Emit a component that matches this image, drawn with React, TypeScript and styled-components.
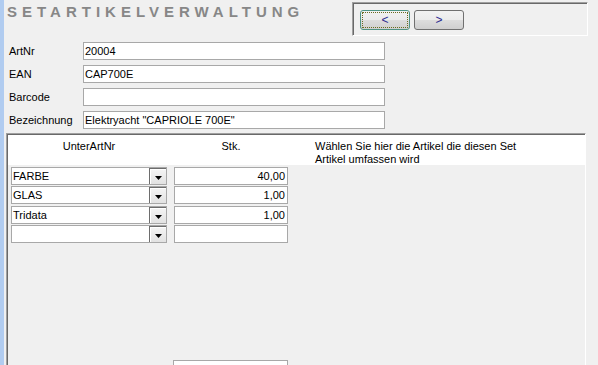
import styled, { createGlobalStyle } from 'styled-components';

const GlobalStyle = createGlobalStyle`
    html, body {
        margin: 0;
        padding: 0;
        background: #f0f0f0;
    }
`;

const Page = styled.div`
    display: flex;
    width: 598px;
    height: 365px;
    overflow: hidden;
    background: #f0f0f0;
    font-family: "Liberation Sans", Arial, sans-serif;
    font-size: 11px;
    color: #000;
`;

const SideBar = styled.div`
    flex: 0 0 4px;
    background: #b1ccf0;
`;

const Main = styled.div`
    flex: 1;
    display: flex;
    flex-direction: column;
    padding-left: 2px;
    min-width: 0;
`;

const TopBar = styled.div`
    display: flex;
    align-items: flex-start;
    height: 38px;
`;

const Title = styled.h1`
    margin: 0;
    padding: 3px 0 0 1px;
    font-size: 15px;
    font-weight: bold;
    letter-spacing: 5px;
    color: #878787;
    line-height: 17px;
    white-space: nowrap;
`;

const NavFrame = styled.div`
    margin: 2px 10px 0 auto;
    width: 236px;
    height: 34px;
    box-sizing: border-box;
    display: flex;
    gap: 4px;
    padding: 7px 0 0 7px;
    border-top: 1px solid #a0a0a0;
    border-left: 1px solid #a0a0a0;
    border-right: 1px solid #fff;
    border-bottom: 1px solid #fff;
    box-shadow: inset 1px 1px 0 #696969;
`;

const NavButton = styled.button<{ $focused?: boolean }>`
    width: 50px;
    height: 20px;
    box-sizing: border-box;
    padding: 0;
    border: 1px solid ${(p) => (p.$focused ? '#4f9384' : '#707070')};
    border-radius: 3px;
    background: linear-gradient(#f2f2f2, #ebebeb 50%, #dddddd 50%, #cfcfcf);
    font-family: "Liberation Sans", Arial, sans-serif;
    font-size: 12px;
    color: #2b2b90;
    outline: ${(p) => (p.$focused ? '1px dotted #6b6b20' : 'none')};
    outline-offset: -3px;
`;

const Fields = styled.div`
    display: grid;
    grid-template-columns: 77px 302px;
    grid-auto-rows: 18px;
    row-gap: 5px;
    margin-top: 6px;
`;

const Label = styled.label`
    display: flex;
    align-items: center;
    padding-left: 3px;
`;

const TextBox = styled.div<{ $align?: 'left' | 'right' }>`
    box-sizing: border-box;
    height: 18px;
    background: #fff;
    border: 1px solid #a8a8a8;
    padding: 0 2px 0 1px;
    line-height: 16px;
    white-space: nowrap;
    overflow: hidden;
    text-align: ${(p) => p.$align ?? 'left'};
`;

const SubForm = styled.div`
    margin: 4px 12px 0 0;
    height: 270px;
    flex-shrink: 0;
    display: flex;
    flex-direction: column;
    border-top: 1px solid #a0a0a0;
    border-left: 1px solid #a0a0a0;
    border-right: 1px solid #fff;
    box-shadow: inset 1px 1px 0 #696969;
    padding: 1px 0 0 1px;
`;

const SubHeader = styled.div`
    display: grid;
    grid-template-columns: 156px 114px 1fr;
    column-gap: 7px;
    height: 30px;
    box-sizing: border-box;
    padding: 5px 0 0 3px;
    background: #fff;
    line-height: 13px;
`;

const ColTitle = styled.div`
    text-align: center;
`;

const Hint = styled.div`
    padding-left: 20px;
    max-width: 212px;
`;

const Detail = styled.div`
    height: 195px;
    display: flex;
    flex-direction: column;
    gap: 1.3px;
    padding: 2px 0 0 3px;
    box-sizing: border-box;
`;

const Row = styled.div`
    display: grid;
    grid-template-columns: 156px 114px;
    column-gap: 7px;
    height: 18px;
`;

const Combo = styled.div`
    display: flex;
    box-sizing: border-box;
    height: 18px;
    background: #fff;
    border: 1px solid #a8a8a8;
`;

const ComboText = styled.span`
    flex: 1;
    padding-left: 1px;
    line-height: 16px;
    white-space: nowrap;
    overflow: hidden;
`;

const DropButton = styled.span`
    display: flex;
    align-items: flex-end;
    justify-content: center;
    width: 17px;
    height: 16px;
    box-sizing: border-box;
    padding-bottom: 4px;
    border-left: 1px solid #6d6d6d;
    border-top: 1px solid #6d6d6d;
    background: linear-gradient(#f4f4f4, #e2e2e2);
    box-shadow: inset 1px 1px 0 #fff;
`;

const Footer = styled.div`
    display: grid;
    grid-template-columns: 156px 115px;
    column-gap: 6px;
    padding-left: 3px;
`;

const items = [
    { name: 'FARBE', qty: '40,00' },
    { name: 'GLAS', qty: '1,00' },
    { name: 'Tridata', qty: '1,00' },
    { name: '', qty: '' },
];

function Arrow() {
    return (
        <svg width="7" height="4" viewBox="0 0 7 4">
            <path d="M0 0h7L3.5 4z" fill="#000" />
        </svg>
    );
}

export default function App() {
    return (
        <Page>
            <GlobalStyle />
            <SideBar />
            <Main>
                <TopBar>
                    <Title>SETARTIKELVERWALTUNG</Title>
                    <NavFrame>
                        <NavButton $focused>&lt;</NavButton>
                        <NavButton>&gt;</NavButton>
                    </NavFrame>
                </TopBar>
                <Fields>
                    <Label>ArtNr</Label>
                    <TextBox>20004</TextBox>
                    <Label>EAN</Label>
                    <TextBox>CAP700E</TextBox>
                    <Label>Barcode</Label>
                    <TextBox />
                    <Label>Bezeichnung</Label>
                    <TextBox>Elektryacht "CAPRIOLE 700E"</TextBox>
                </Fields>
                <SubForm>
                    <SubHeader>
                        <ColTitle>UnterArtNr</ColTitle>
                        <ColTitle>Stk.</ColTitle>
                        <Hint>Wählen Sie hier die Artikel die diesen Set Artikel umfassen wird</Hint>
                    </SubHeader>
                    <Detail>
                        {items.map((item, i) => (
                            <Row key={i}>
                                <Combo>
                                    <ComboText>{item.name}</ComboText>
                                    <DropButton>
                                        <Arrow />
                                    </DropButton>
                                </Combo>
                                <TextBox $align="right">{item.qty}</TextBox>
                            </Row>
                        ))}
                    </Detail>
                    <Footer>
                        <div />
                        <TextBox />
                    </Footer>
                </SubForm>
            </Main>
        </Page>
    );
}
